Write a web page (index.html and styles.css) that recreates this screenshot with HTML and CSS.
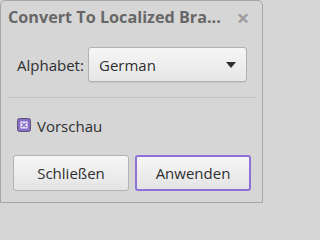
FILE: index.html
```html
<!DOCTYPE html>
<html>
<head>
<meta charset="utf-8">
<link rel="stylesheet" href="styles.css">
</head>
<body>
<div class="window">
  <div class="titlebar">
    <span class="title">Convert To Localized Bra...</span>
    <span class="close">×</span>
  </div>
  <div class="field-row">
    <span class="label">Alphabet:</span>
    <div class="combo">
      <span class="combo-text">German</span>
      <svg class="combo-arrow" width="10" height="6" viewBox="0 0 10 6"><path d="M0 0 H10 L5 6 Z" fill="#2e2e2e"/></svg>
    </div>
  </div>
  <div class="separator"></div>
  <div class="check-row">
    <svg class="checkbox" width="14" height="14" viewBox="0 0 14 14">
      <rect x="0.5" y="0.5" width="13" height="13" rx="2" fill="#8a6cc9" stroke="#5e5672"/>
      <rect x="3.5" y="3.5" width="7" height="7" fill="#f4f2f8"/>
      <path d="M4.8 4.8 L9.2 9.2 M9.2 4.8 L4.8 9.2" stroke="#8a6cc9" stroke-width="1.5"/>
    </svg>
    <span class="check-label">Vorschau</span>
  </div>
  <div class="buttons">
    <button class="btn">Schließen</button>
    <button class="btn btn-default">Anwenden</button>
  </div>
</div>
</body>
</html>
```

FILE: styles.css
```css
html, body {
  margin: 0;
  padding: 0;
  background: #d6d6d6;
}
body {
  width: 264px;
  height: 204px;
  overflow: hidden;
  font-family: "Open Sans", "Noto Sans", sans-serif;
  color: #2f2f2f;
}
.window {
  box-sizing: border-box;
  width: 263px;
  height: 203px;
  border: 1px solid #a6a6a6;
  border-radius: 5px 5px 0 0;
  background: #d6d6d6;
  display: flex;
  flex-direction: column;
}
.titlebar {
  box-sizing: border-box;
  height: 33px;
  padding: 6px 0 0 7px;
  display: flex;
  align-items: flex-start;
}
.title {
  font-weight: bold;
  font-size: 16.2px;
  line-height: 20px;
  color: #676767;
  white-space: nowrap;
  flex: 1;
}
.close {
  font-weight: bold;
  font-size: 22px;
  line-height: 20px;
  color: #9c9c9c;
  width: 20px;
  margin-right: 9px;
  text-align: center;
}
.field-row {
  margin-top: 13px;
  padding-left: 16px;
  display: flex;
  align-items: center;
  height: 35px;
}
.label {
  font-size: 15px;
  width: 71px;
}
.combo {
  box-sizing: border-box;
  width: 159px;
  height: 35px;
  border: 1px solid #b1b1b1;
  border-radius: 3px;
  background: linear-gradient(#f6f6f6, #e6e6e6);
  display: flex;
  align-items: center;
  padding: 0 10px 0 10px;
  box-shadow: 0 1px 0 rgba(0,0,0,0.06);
}
.combo-text {
  font-size: 15px;
  flex: 1;
}
.separator {
  margin: 15px 6px 0 7px;
  height: 1px;
  background: #c2c2c2;
}
.check-row {
  margin-top: 20px;
  padding-left: 16px;
  height: 14px;
  display: flex;
  align-items: center;
}
.checkbox {
  display: block;
}
.check-label {
  font-size: 15px;
  line-height: 20px;
  margin-left: 6px;
  position: relative;
  top: 1px;
}
.buttons {
  margin-top: 23px;
  padding-left: 12px;
  display: flex;
  gap: 6px;
}
.btn {
  box-sizing: border-box;
  width: 116px;
  height: 36px;
  border: 1px solid #b3b3b3;
  border-radius: 3px;
  background: linear-gradient(#f6f6f6, #e4e4e4);
  font-family: "Open Sans", "Noto Sans", sans-serif;
  font-size: 15px;
  color: #2f2f2f;
  padding: 0;
}
.btn-default {
  border: 2px solid #8f70d6;
}
```
